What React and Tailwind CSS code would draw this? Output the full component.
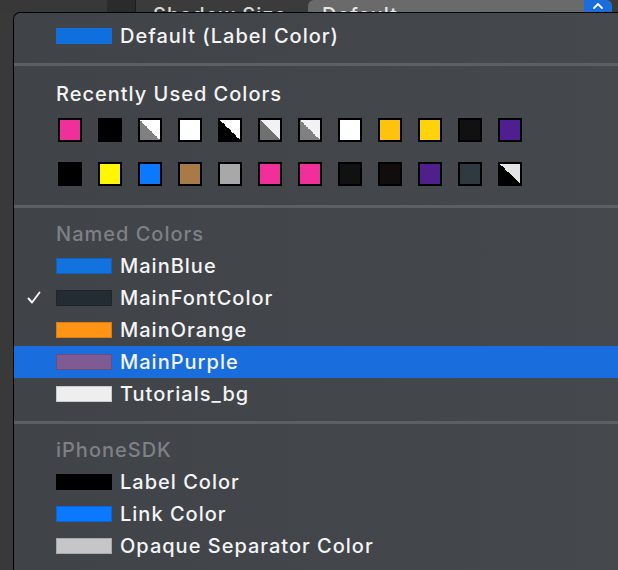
import React from 'react';

const recentTop = [
  { c: '#f0309a' },
  { c: '#000000' },
  { split: ['#808080', '#ffffff'] },
  { c: '#ffffff' },
  { split: ['#000000', '#ffffff'] },
  { split: ['#707070', '#f2f2f4'] },
  { split: ['#808080', '#f2f2f4'] },
  { c: '#ffffff' },
  { c: '#ffc30e' },
  { c: '#ffd30b' },
  { c: '#111111' },
  { c: '#4f1f91' },
];

const recentBottom = [
  { c: '#000000' },
  { c: '#fff700' },
  { c: '#0a78ff' },
  { c: '#a87a48' },
  { c: '#a8a8a8' },
  { c: '#f12f9a' },
  { c: '#f12f9a' },
  { c: '#111111' },
  { c: '#110d0c' },
  { c: '#4f1f8c' },
  { c: '#2e3a40' },
  { split: ['#000000', '#e4e4e4'] },
];

const named = [
  { name: 'MainBlue', c: '#1272de' },
  { name: 'MainFontColor', c: '#232c33', checked: true },
  { name: 'MainOrange', c: '#fd9416' },
  { name: 'MainPurple', c: '#7e5b92', selected: true },
  { name: 'Tutorials_bg', c: '#eeeeee' },
];

const sdk = [
  { name: 'Label Color', c: '#000000' },
  { name: 'Link Color', c: '#0a78ff' },
  { name: 'Opaque Separator Color', c: '#c6c6c8' },
  { name: 'Placeholder Text Color', c: '#8a8a8e' },
];

function Swatch({ item }) {
  if (item.split) {
    const [a, b] = item.split;
    return (
      <div
        className="w-6 h-6 border-2 border-black"
        style={{ background: `linear-gradient(to top right, ${a} 50%, ${b} 50%)` }}
      />
    );
  }
  return <div className="w-6 h-6 border-2 border-black" style={{ background: item.c }} />;
}

function Check() {
  return (
    <svg width="16" height="16" viewBox="0 0 16 16" className="absolute left-[12px] top-1/2 -translate-y-1/2">
      <path d="M2.5 8.5 L6 12.5 L13.5 2.5" fill="none" stroke="#f4f4f4" strokeWidth="1.9" strokeLinecap="round" strokeLinejoin="round" />
    </svg>
  );
}

function ColorRow({ name, c, checked, selected }) {
  return (
    <div className={`relative flex items-center h-8 pl-[42px] gap-2 ${selected ? 'bg-[#1a6ddd]' : ''}`}>
      {checked && <Check />}
      <div className="w-14 h-4 border border-black/15" style={{ background: c }} />
      <span className="text-[#f4f4f5] whitespace-nowrap">{name}</span>
    </div>
  );
}

function Separator({ className }) {
  return <div className={`h-[3px] bg-[#5c5f65] ${className}`} />;
}

export default function App() {
  return (
    <div
      className="relative w-[618px] h-[570px] overflow-hidden bg-[#393939] text-[20px] font-medium tracking-[1px] leading-none"
      style={{ fontFamily: 'Inter, "Noto Sans", sans-serif' }}
    >
      {/* window behind the menu */}
      <div className="flex h-[13px] overflow-hidden">
        <div className="w-[107px] bg-[#383838]" />
        <div className="w-[29px] bg-[#2b2b2b] border-r border-[#1c1c1c]" />
        <div className="flex-1 flex bg-[#3b3b3b]">
          <div className="w-[172px] pl-[17px] pt-[5px] text-[#d8d8d8] whitespace-nowrap overflow-hidden">Shadow Size</div>
          <div className="w-[304px] flex rounded-t-[6px] bg-[#6a6a6a] overflow-hidden">
            <div className="flex-1 pl-[14px] pt-[5px] text-[#e6e6e6]">Default</div>
            <div className="w-[28px] bg-[#1b6ddc] flex justify-center pt-[2px]">
              <svg width="12" height="8" viewBox="0 0 12 8">
                <path d="M2 6 L6 2 L10 6" fill="none" stroke="#fff" strokeWidth="1.8" strokeLinecap="round" />
              </svg>
            </div>
          </div>
        </div>
      </div>

      {/* color menu */}
      <div className="absolute left-[13px] top-[12px] w-[640px] h-[600px] rounded-tl-[7px] border-l border-t border-black bg-gradient-to-r from-[#404348] to-[#45484d]">
        <div className="pt-[7px]">
          <div className="flex items-center h-8 pl-[42px] gap-2">
            <div className="w-14 h-4 bg-[#0f6fdc]" />
            <span className="text-[#f4f4f5]">Default (Label Color)</span>
          </div>

          <Separator className="mt-[11px] mb-[12px]" />

          <div className="flex items-center h-8 pl-[42px] text-[#f4f4f5]">Recently Used Colors</div>

          <div className="pl-[44px] pt-2 flex flex-col gap-5">
            <div className="flex gap-4">
              {recentTop.map((s, i) => (
                <Swatch key={i} item={s} />
              ))}
            </div>
            <div className="flex gap-4">
              {recentBottom.map((s, i) => (
                <Swatch key={i} item={s} />
              ))}
            </div>
          </div>

          <Separator className="mt-[19px] mb-[10px]" />

          <div className="flex items-center h-8 pl-[42px] text-[#7e8186]">Named Colors</div>
          {named.map((n) => (
            <ColorRow key={n.name} {...n} />
          ))}

          <Separator className="mt-[11px] mb-[10px]" />

          <div className="flex items-center h-8 pl-[42px] text-[#7e8186]">iPhoneSDK</div>
          {sdk.map((n) => (
            <ColorRow key={n.name} {...n} />
          ))}
        </div>
      </div>
    </div>
  );
}
